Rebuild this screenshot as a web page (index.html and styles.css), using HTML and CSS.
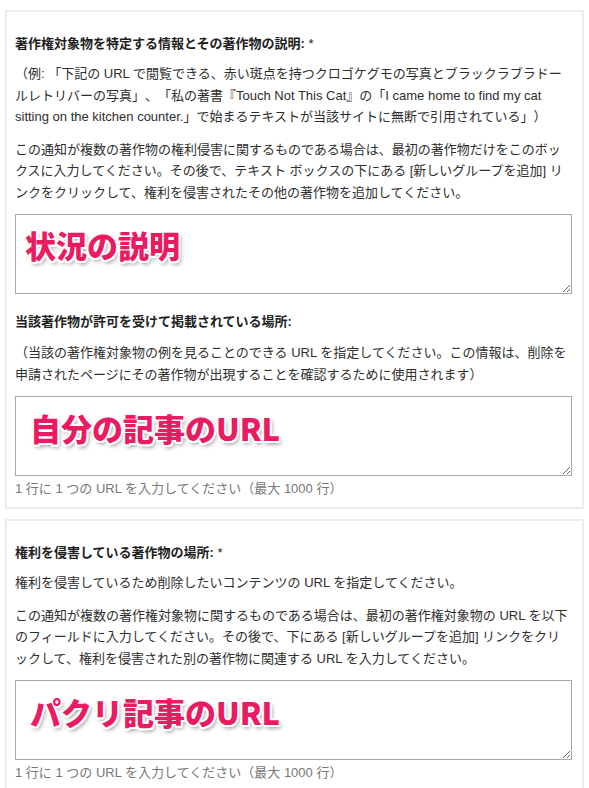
FILE: index.html
```html
<!DOCTYPE html>
<html lang="ja">
<head>
<meta charset="utf-8">
<title>著作権侵害の通知</title>
<link rel="stylesheet" href="styles.css">
</head>
<body>
<div class="page">
  <section class="card">
    <h3 class="label">著作権対象物を特定する情報とその著作物の説明: <span class="req">*</span></h3>
    <p class="text">（例: 「下記の URL で閲覧できる、赤い斑点を持つクロゴケグモの写真とブラックラブラドールレトリバーの写真」、「私の著書『Touch Not This Cat』の「I came home to find my cat sitting on the kitchen counter.」で始まるテキストが当該サイトに無断で引用されている」）</p>
    <p class="text">この通知が複数の著作物の権利侵害に関するものである場合は、最初の著作物だけをこのボックスに入力してください。その後で、テキスト ボックスの下にある [新しいグループを追加] リンクをクリックして、権利を侵害されたその他の著作物を追加してください。</p>
    <textarea class="box annot a1">状況の説明</textarea>
    <h3 class="label second">当該著作物が許可を受けて掲載されている場所:</h3>
    <p class="text">（当該の著作権対象物の例を見ることのできる URL を指定してください。この情報は、削除を申請されたページにその著作物が出現することを確認するために使用されます）</p>
    <textarea class="box annot a2">自分の記事のURL</textarea>
    <p class="hint">1 行に 1 つの URL を入力してください（最大 1000 行）</p>
  </section>
  <section class="card">
    <h3 class="label">権利を侵害している著作物の場所: <span class="req">*</span></h3>
    <p class="text">権利を侵害しているため削除したいコンテンツの URL を指定してください。</p>
    <p class="text">この通知が複数の著作権対象物に関するものである場合は、最初の著作権対象物の URL を以下のフィールドに入力してください。その後で、下にある [新しいグループを追加] リンクをクリックして、権利を侵害された別の著作物に関連する URL を入力してください。</p>
    <textarea class="box annot a3">パクリ記事のURL</textarea>
    <p class="hint">1 行に 1 つの URL を入力してください（最大 1000 行）</p>
  </section>
</div>
</body>
</html>
```
FILE: styles.css
```css
html, body {
  margin: 0;
  padding: 0;
  background: #ffffff;
}
body {
  font-family: "Liberation Sans", "Noto Sans CJK JP", sans-serif;
  font-size: 13px;
  color: #2e2e2e;
  text-spacing-trim: space-all;
}
.page {
  padding: 10px 5px 0 5px;
  display: flex;
  flex-direction: column;
  gap: 10px;
}
.card {
  border: 2px solid #ebebf0;
  padding: 21px 10px 8px 8px;
  display: flex;
  flex-direction: column;
}
.label {
  margin: 0 0 9px 0;
  font-size: 13px;
  line-height: 21px;
  font-weight: bold;
  color: #1e1e1e;
}
.label.second {
  margin-top: 17px;
  margin-bottom: 10px;
}
.req {
  font-weight: normal;
}
.text {
  margin: 0 0 11px 0;
  line-height: 21.5px;
}
.box {
  display: block;
  box-sizing: border-box;
  width: 100%;
  height: 80px;
  margin: 0;
  border: 1px solid #a9a9a9;
  background: #ffffff;
  resize: vertical;
  text-spacing-trim: space-all;
}
.annot {
  font-family: "Noto Sans CJK JP", "Liberation Sans", sans-serif;
  font-weight: 900;
  font-size: 31px;
  line-height: 36px;
  color: #ea1b62;
  padding: 12px 12px 0 9px;
  text-shadow:
    -1.5px -1.5px 0 #fff, 1.5px -1.5px 0 #fff, -1.5px 1.5px 0 #fff, 1.5px 1.5px 0 #fff,
    0 -2px 0 #fff, 0 2px 0 #fff, -2px 0 0 #fff, 2px 0 0 #fff,
    2px 3px 4px rgba(0, 0, 0, 0.45);
}
.a2, .a3 {
  padding-left: 14px;
}
.a2 {
  padding-top: 13px;
}
.a3 {
  padding-top: 13px;
}
.hint {
  margin: 3px 0 0 0;
  line-height: 20px;
  color: #777777;
}
```
